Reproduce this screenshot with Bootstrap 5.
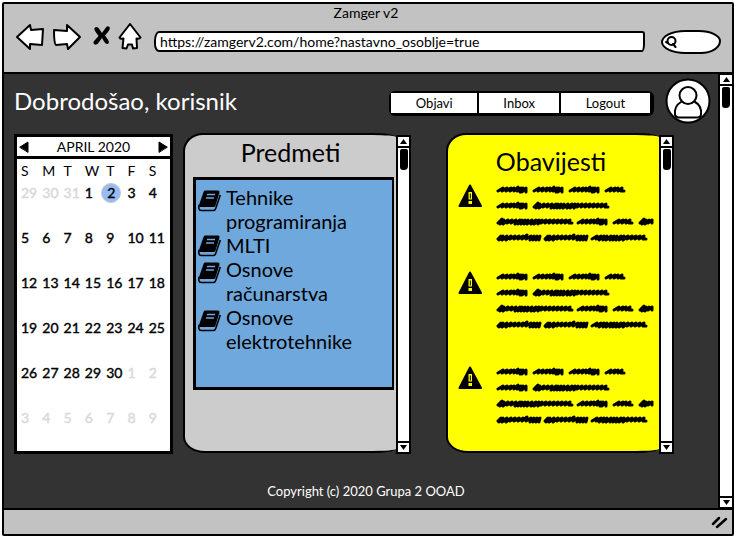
<!DOCTYPE html>
<html lang="bs">
<head>
<meta charset="utf-8">
<meta name="viewport" content="width=device-width, initial-scale=1">
<title>Zamger v2</title>
<link href="https://cdn.jsdelivr.net/npm/bootstrap@5.3.0/dist/css/bootstrap.min.css" rel="stylesheet">
<style>
body{font-family:Lato,"Noto Sans",sans-serif;font-size:13px;line-height:16px;color:#000;background:#fff}
button{color:#000}
.window-frame{min-height:100vh;padding:2px 0 1px 2px}
.window-box{border:2px solid #000;border-radius:2px;background:#333}
.chrome-bar{background:#c2c2c2;border-bottom:2px solid #000;height:70px}
.chrome-title{height:19px;padding:1px 4px 0 0;font-size:14px}
.tool-row{padding:0 11px 0 12px;height:38px}
.icon-btn{background:none;border:0;padding:0;line-height:0}
.icon-btn svg,.sketch{fill:#fff;stroke:#000;stroke-width:2;stroke-linejoin:round;stroke-linecap:round}
.url-box{height:21px;border:2px solid #000;border-radius:5px 3px 3px 5px/10px 3px 8px 8px;padding:0 4px;background:#fff;min-width:0;margin:8px 16px 0 12px;outline:0;font-size:14px;line-height:16px}
.search-box{width:60px;height:24px;border:2px solid #000;border-radius:24px 22px 20px 24px/12px 11px 13px 12px;background:#fff;margin-top:7px;padding-left:2px}
.search-box input{width:30px;border:0;background:none;outline:0}
.page-area{padding:4px 0 0 10px}
.greeting{font-size:24px;line-height:32px;font-weight:400;color:#fff}
.menu-group{width:265px;margin:5px 11px 0 0;border:2px solid #000;border-right-width:4px;border-bottom-width:3px}
.menu-group .btn{background:#fff;color:#000;font-size:13px;line-height:16px;padding:2px 0;border:0;border-radius:0}
.menu-group .btn+.btn{border-left:2px solid #000}
.avatar-gap{margin-right:7px}
.panels{margin-top:9px;height:321px}
.cal{flex:153 1 6px;margin-right:10px;background:#fff;border:3px solid #000;margin-top:1px}
.cal-head{height:22px;border-bottom:3px solid #000;padding:0 2px}
.cal-head span{font-size:14px;line-height:18px}
.cal table{table-layout:fixed;margin-left:4px;width:calc(100% - 4px)}
.cal th,.cal td{padding:0;font-weight:400;vertical-align:top;height:45px;line-height:20px}
.cal th{height:22px;line-height:24px;font-size:14px}
.cal td{font-size:14px;white-space:nowrap;-webkit-text-stroke:.4px}
.cal td.out{color:#d8d8d8}
.picked{display:inline-block;width:20px;height:20px;line-height:18px;border-radius:50%;background:#97bcf5;border:1px solid #c8c8c8;margin-left:-5px;padding-left:5px}
.panel-wrap{flex:228 1 0;min-width:0}
.panel-wrap.second{margin-left:35px;margin-right:44px}
.panel-body{background:#ccc;border:2px solid #000;border-right:0;border-radius:20px 24px 24px 22px/18px 4px 4px 16px;min-width:0;margin-bottom:1px}
.panel-body.yellow{background:#ff0}
.panel-title{font-size:25px;line-height:30px;font-weight:400;padding-top:2px}
.subjects{background:#6fa8dc;border:3px solid #000;border-width:3px 2px 3px 3px;margin:10px 2px 0 8px;height:213px;padding:5px 0 0 2px}
.subjects li{display:flex;font-size:20px;line-height:24px;gap:4px}
.subjects svg{flex:none}
.bar{width:15px;flex:none;background:#fff;border:2px solid #000}
.panel-wrap .bar{margin-top:2px}
.page-bar{width:14px;border-width:1px 0 1px 2px}
.bar button{height:11px;border:0;background:none;padding:0;line-height:0;width:100%}
.bar .up{border-bottom:2px solid #000}
.bar .down{border-top:2px solid #000}
.thumb{width:8px;height:21px;background:#000;border-radius:2px 2px 4px 3px;margin:1px auto 0}
.page-bar .thumb{margin-left:2px}
.notice-title{margin-top:9px;margin-right:5px}
.notice{height:87px;padding-left:10px}
.notice.tall{height:95px}
.notice>svg{flex:none}
.scribble{margin-left:12px}
.copy{color:#fff;height:51px;padding-top:29px}
.status-bar{height:26px;background:#c2c2c2;border-top:2px solid #000;padding-right:3px}
</style>
<script src="https://cdn.jsdelivr.net/npm/bootstrap@5.3.0/dist/js/bootstrap.bundle.min.js"></script>
</head>
<body>
<svg width="0" height="0" class="position-absolute" aria-hidden="true">
 <defs>
  <g id="book"><path d="M7 .5h13q2 0 1.500 2l-4 13q-.6 1.500-2 1.500H3q-2.500 0-2-2L5.500 2q.3-1.500 1.500-1.500z" fill="#000"/><path d="M9 4.500h8M8 8h8" fill="none" stroke="#6fa8dc" stroke-width="1.300"/><path d="M1 15q-1 5.500 2.500 5.500h12q1.600 0 2.200-2L22.300 5" fill="none" stroke="#000" stroke-width="1.600"/></g>
  <g id="warn"><path d="M12 1.500L23 22H1.500z" fill="#000" stroke="#000" stroke-width="2" stroke-linejoin="round"/><path d="M10.500 8h3.500v7.500h-3.500zM10.500 17h3.500v3h-3.500z" fill="#ff0"/><path d="M12.300 9.500v5" stroke="#000"/></g>
  <path id="s20" d="M1 5l5-3-1 3 5-3-1 3 4-3 0 3 4-3-1 3h3"/>
  <path id="s31" d="M1 5l5-3-1 3 5-3-1 3 5-3-1 3 4-3 0 3 4-4-1 4 4-3-1 4 3-4-1 4 4-4v4"/>
  <path id="s42" d="M1 5l3-3-2 4 4-4-1 4 5-4-1 4 5-4-1 3 5-3-1 3 5-3-1 3 5-3-1 3 5-4-1 4 5-3-1 4 4-4-1 4 4-4-1 4 4-4-1 4"/>
  <path id="s55" d="M1 5l5-3-1 3 5-3-2 4 5-4-1 4 4-4-1 4 5-4-1 4 4-4-1 4 4-4-1 4 5-4-2 4 5-4-1 4 5-4-1 3 5-3-1 3 5-3-1 3 5-3-1 3 5-3-1 3h3"/>
  <path id="s74" d="M1 5l4-4-2 5 4-4-1 4 5-4-1 3 5-3-1 3 5-3-1 4 5-4-2 4 4-4-1 4 4-4-1 4 4-4-1 4 5-4-1 4 5-4-2 4 5-4-1 4 4-4-1 3 5-3-1 3 5-3-1 3 5-3-1 3 5-3-1 3 5-3-1 3 5-3-1 3 5-3-1 3h3"/>
  <g id="lorem" fill="none" stroke="#000" stroke-width="3" stroke-linejoin="round" stroke-linecap="round">
   <use href="#s31" x="1" y="2"/><use href="#s31" x="37" y="2"/><use href="#s31" x="73" y="2"/><use href="#s20" x="109" y="2"/>
   <use href="#s31" x="1" y="18"/><use href="#s74" x="37" y="18"/>
   <use href="#s74" x="1" y="34"/><use href="#s31" x="81" y="34"/><use href="#s20" x="117" y="34"/><path d="M144 39l4-4-2 5 4-4-1 4 4-4-1 3 4-3v3"/>
   <use href="#s42" x="1" y="50"/><use href="#s42" x="48" y="50"/><use href="#s55" x="95" y="50"/>
  </g>
 </defs>
</svg>

<div class="window-frame d-flex">
<div class="window-box d-flex flex-column flex-grow-1">
 <header class="chrome-bar">
  <div class="chrome-title text-center">Zamger v2</div>
  <div class="tool-row d-flex align-items-start">
   <button class="icon-btn" aria-label="Back"><svg width="28" height="28" viewBox="0 0 28 28"><path d="M1 14L14 2l1 5 12-1-1 16-12-1v5z"/></svg></button>
   <button class="icon-btn ms-2" aria-label="Forward"><svg width="30" height="28" viewBox="0 0 30 28"><path d="M2 7l13 1V2l13 12-12 12-1-5-11 1q-2-1-2-15z"/></svg></button>
   <button class="icon-btn ms-2" aria-label="Stop"><svg width="24" height="28" viewBox="0 0 24 28"><path d="M4.500 5q2-2 4 0l3.500 5 3.500-5q2-3 4-1 1 2-1.500 5l-3 3.500 3.500 5q1 3-1 3.500-2 0-3.500-2.500l-2-3.500-4 5.500q-2 2-4 .5-1.500-2 1-4l3.500-4-3.500-5q-1-2-.5-3z" style="fill:#000;stroke:none"/></svg></button>
   <button class="icon-btn ms-1" aria-label="Home"><svg width="24" height="28" viewBox="0 0 24 28"><path d="M12 1L1.500 14.500q1 2 4 1l-1 9.500 4 .5 1.500-4h4l1 4 4-.5-.5-9.500q3 .5 4-1z"/></svg></button>
   <input class="url-box flex-grow-1" type="text" aria-label="Address" value="https://zamgerv2.com/home?nastavno_osoblje=true">
   <div class="search-box d-flex align-items-center"><svg width="13" height="14" viewBox="0 0 13 14" class="sketch"><circle cx="6.500" cy="6" r="4"/><path d="M3 8l-2-1M8 9l2.500 3"/></svg><input type="text" aria-label="Search"></div>
  </div>
 </header>

 <div class="d-flex flex-grow-1">
  <main class="page-area flex-grow-1 d-flex flex-column">
   <div class="d-flex align-items-center">
    <h1 class="greeting mb-0 me-auto">Dobrodošao, korisnik</h1>
    <div class="menu-group btn-group">
     <button class="btn">Objavi</button><button class="btn">Inbox</button><button class="btn">Logout</button>
    </div>
    <button class="icon-btn avatar-gap" aria-label="Profile"><svg width="46" height="46" viewBox="0 0 46 46"><circle cx="23" cy="23" r="21.500"/><path d="M16 24q-7 4-6 13 1 2 3 2.500h20q3-.5 3-3 1-9-6-12.500"/><circle cx="23" cy="17.500" r="8.500"/></svg></button>
   </div>

   <div class="panels d-flex">
    <section class="cal" aria-label="April 2020">
     <div class="cal-head d-flex align-items-center justify-content-between">
      <button class="icon-btn" aria-label="Previous month"><svg width="10" height="12" viewBox="0 0 10 12"><path d="M1 6l8-5v10z" style="fill:#000;stroke-width:1"/></svg></button>
      <span>APRIL 2020</span>
      <button class="icon-btn" aria-label="Next month"><svg width="10" height="12" viewBox="0 0 10 12"><path d="M9 6L1 1v10z" style="fill:#000;stroke-width:1"/></svg></button>
     </div>
     <table>
      <thead><tr><th>S</th><th>M</th><th>T</th><th>W</th><th>T</th><th>F</th><th>S</th></tr></thead>
      <tbody>
       <tr><td class="out">29</td><td class="out">30</td><td class="out">31</td><td>1</td><td><span class="picked">2</span></td><td>3</td><td>4</td></tr>
       <tr><td>5</td><td>6</td><td>7</td><td>8</td><td>9</td><td>10</td><td>11</td></tr>
       <tr><td>12</td><td>13</td><td>14</td><td>15</td><td>16</td><td>17</td><td>18</td></tr>
       <tr><td>19</td><td>20</td><td>21</td><td>22</td><td>23</td><td>24</td><td>25</td></tr>
       <tr><td>26</td><td>27</td><td>28</td><td>29</td><td>30</td><td class="out">1</td><td class="out">2</td></tr>
       <tr><td class="out">3</td><td class="out">4</td><td class="out">5</td><td class="out">6</td><td class="out">7</td><td class="out">8</td><td class="out">9</td></tr>
      </tbody>
     </table>
    </section>

    <section class="panel-wrap d-flex">
     <div class="panel-body flex-grow-1">
      <h2 class="panel-title text-center mb-0">Predmeti</h2>
      <ul class="subjects list-unstyled">
       <li><svg width="24" height="28"><use href="#book" y="5"/></svg><span>Tehnike programiranja</span></li>
       <li><svg width="24" height="24"><use href="#book" y="2"/></svg><span>MLTI</span></li>
       <li><svg width="24" height="28"><use href="#book" y="5"/></svg><span>Osnove računarstva</span></li>
       <li><svg width="24" height="28"><use href="#book" y="5"/></svg><span>Osnove elektrotehnike</span></li>
      </ul>
     </div>
     <div class="bar d-flex flex-column">
      <button class="up" aria-label="Scroll up"><svg width="9" height="7"><path d="M4.500 1L8 6H1z"/></svg></button><div class="thumb"></div>
      <button class="down mt-auto" aria-label="Scroll down"><svg width="9" height="7"><path d="M4.500 6L8 1H1z"/></svg></button>
     </div>
    </section>

    <section class="panel-wrap second d-flex">
     <div class="panel-body yellow flex-grow-1">
      <h2 class="panel-title notice-title text-center mb-0">Obavijesti</h2>
      <div class="pt-2">
       <div class="notice d-flex"><svg width="26" height="24"><use href="#warn"/></svg><svg class="scribble" width="162" height="62" role="img" aria-label="Notice"><use href="#lorem"/></svg></div>
       <div class="notice tall d-flex"><svg width="26" height="24"><use href="#warn"/></svg><svg class="scribble" width="162" height="62" role="img" aria-label="Notice"><use href="#lorem"/></svg></div>
       <div class="notice d-flex"><svg width="26" height="24"><use href="#warn"/></svg><svg class="scribble" width="162" height="62" role="img" aria-label="Notice"><use href="#lorem"/></svg></div>
      </div>
     </div>
     <div class="bar d-flex flex-column">
      <button class="up" aria-label="Scroll up"><svg width="9" height="7"><path d="M4.500 1L8 6H1z"/></svg></button><div class="thumb"></div>
      <button class="down mt-auto" aria-label="Scroll down"><svg width="9" height="7"><path d="M4.500 6L8 1H1z"/></svg></button>
     </div>
    </section>
   </div>
   <footer class="copy text-center">Copyright (c) 2020 Grupa 2 OOAD</footer>
  </main>
  <div class="bar page-bar d-flex flex-column">
   <button class="up" aria-label="Scroll up"><svg width="9" height="7"><path d="M4.500 1L8 6H1z"/></svg></button><div class="thumb"></div>
   <button class="down mt-auto" aria-label="Scroll down"><svg width="9" height="7"><path d="M4.500 6L8 1H1z"/></svg></button>
  </div>
 </div>
 <div class="status-bar d-flex align-items-center justify-content-end"><svg width="18" height="14" fill="none" stroke="#000" stroke-width="2.500" stroke-linecap="round"><path d="M2 9l6-6M6 12l9-8"/></svg></div>
</div>
</div>
</body>
</html>
